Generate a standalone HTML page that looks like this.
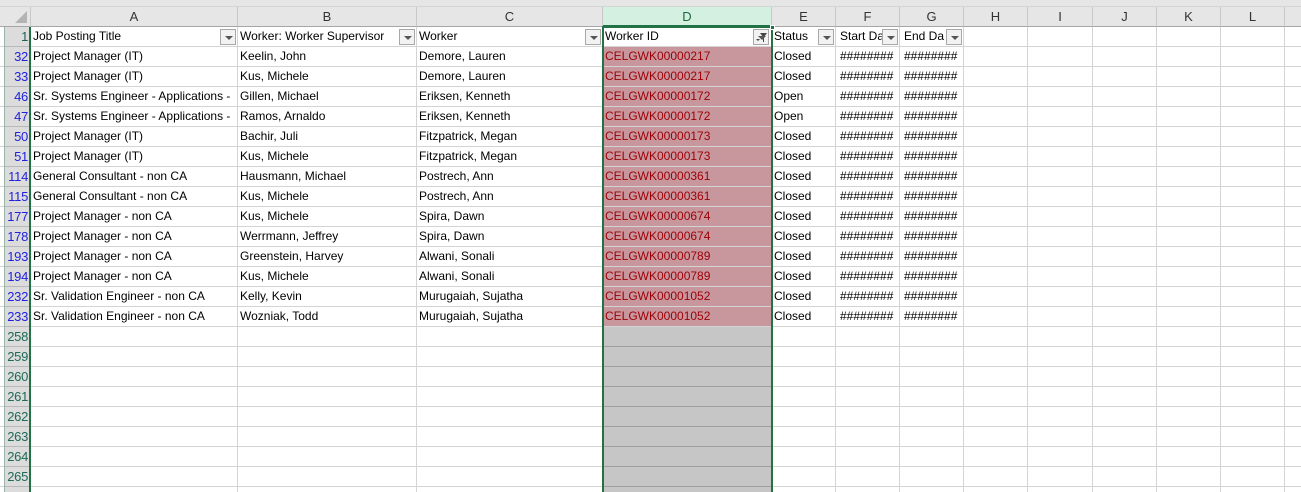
<!DOCTYPE html><html style="width:1301px;height:492px;overflow:hidden"><head><meta charset="utf-8"><style>
*{margin:0;padding:0;box-sizing:border-box}
body{width:1301px;height:492px;overflow:hidden;background:#fff;font-family:"Liberation Sans",Arial,sans-serif;font-size:12px;position:relative}
.top{position:absolute;left:0;top:0;width:1301px;height:7px;background:#e6e6e6;border-bottom:1px solid #d4d4d4}
.hdr{position:absolute;top:7px;height:20px;background:#e6e6e6;border-right:1px solid #c8c8c8;border-bottom:1px solid #a6a6a6;text-align:center;line-height:19px;font-size:13px;color:#333}
.row{position:absolute;left:0;height:20px;width:1301px}
.c{position:absolute;top:0;height:20px;border-right:1px solid #d4d4d4;border-bottom:1px solid #d4d4d4;padding-left:2px;line-height:19px;white-space:nowrap;overflow:hidden;color:#000}
.rh{position:absolute;top:0;left:5px;width:24px;height:20px;background:#dcdcdc;border-bottom:1px solid #b8b8b8;text-align:right;padding-right:1px;line-height:20px;font-size:13px;letter-spacing:-0.3px;color:#2222dd}
.d{background:#c8979e;color:#9c0006;border-right:none}
.de{background:#c6c6c6;border-bottom:1px solid #9e9e9e;border-right:none}
.fb{position:absolute;top:2px;width:16px;height:16px;border:1px solid #a8a8a8;background:#f2f2f2}
.fb:after{content:"";position:absolute;left:4px;top:6px;border-left:4px solid transparent;border-right:4px solid transparent;border-top:4px solid #555}
</style></head><body>
<div class="top"></div>
<div style="position:absolute;left:0;top:7px;width:31px;height:20px;background:#e6e6e6;border-bottom:1px solid #a6a6a6;border-right:1px solid #c8c8c8"><div style="position:absolute;right:3px;bottom:3px;border-left:12px solid transparent;border-bottom:12px solid #b4b4b4"></div></div>
<div class="hdr" style="left:31px;width:207px">A</div>
<div class="hdr" style="left:238px;width:179px">B</div>
<div class="hdr" style="left:417px;width:186px">C</div>
<div class="hdr" style="left:603px;width:169px;background:#d3f0e0;border-bottom:2px solid #217346;color:#1e6a3e">D</div>
<div class="hdr" style="left:772px;width:64px">E</div>
<div class="hdr" style="left:836px;width:64px">F</div>
<div class="hdr" style="left:900px;width:64px">G</div>
<div class="hdr" style="left:964px;width:64px">H</div>
<div class="hdr" style="left:1028px;width:65px">I</div>
<div class="hdr" style="left:1093px;width:64px">J</div>
<div class="hdr" style="left:1157px;width:64px">K</div>
<div class="hdr" style="left:1221px;width:64px">L</div>
<div class="hdr" style="left:1285px;width:16px;border-right:none"></div>
<div id="g"></div>
<script>
var X=[31,238,417,603,772,836,900,964,1028,1093,1157,1221,1285,1302];
var data=[
["1","Job Posting Title","Worker: Worker Supervisor","Worker","Worker ID","Status","Start Da","End Da"],
["32","Project Manager (IT)","Keelin, John","Demore, Lauren","CELGWK00000217","Closed"],
["33","Project Manager (IT)","Kus, Michele","Demore, Lauren","CELGWK00000217","Closed"],
["46","Sr. Systems Engineer - Applications -","Gillen, Michael","Eriksen, Kenneth","CELGWK00000172","Open"],
["47","Sr. Systems Engineer - Applications -","Ramos, Arnaldo","Eriksen, Kenneth","CELGWK00000172","Open"],
["50","Project Manager (IT)","Bachir, Juli","Fitzpatrick, Megan","CELGWK00000173","Closed"],
["51","Project Manager (IT)","Kus, Michele","Fitzpatrick, Megan","CELGWK00000173","Closed"],
["114","General Consultant - non CA","Hausmann, Michael","Postrech, Ann","CELGWK00000361","Closed"],
["115","General Consultant - non CA","Kus, Michele","Postrech, Ann","CELGWK00000361","Closed"],
["177","Project Manager - non CA","Kus, Michele","Spira, Dawn","CELGWK00000674","Closed"],
["178","Project Manager - non CA","Werrmann, Jeffrey","Spira, Dawn","CELGWK00000674","Closed"],
["193","Project Manager - non CA","Greenstein, Harvey","Alwani, Sonali","CELGWK00000789","Closed"],
["194","Project Manager - non CA","Kus, Michele","Alwani, Sonali","CELGWK00000789","Closed"],
["232","Sr. Validation Engineer - non CA","Kelly, Kevin","Murugaiah, Sujatha","CELGWK00001052","Closed"],
["233","Sr. Validation Engineer - non CA","Wozniak, Todd","Murugaiah, Sujatha","CELGWK00001052","Closed"]];
for(var n=258;n<=266;n++)data.push([""+n]);
var h="";
data.forEach(function(r,i){
 var y=27+i*20;
 h+='<div class="row" style="top:'+y+'px">';
 var col=i==0?'#1e5f4e':(r.length>1?'#2222dd':'#1e6a56');
 h+='<div style="position:absolute;left:0;top:0;width:5px;height:20px;border-bottom:1px solid #d4d4d4"></div>';
 h+='<div class="rh" style="color:'+col+'">'+r[0]+'</div>';
 for(var k=0;k<13;k++){
  var t=r[k+1]||"";
  if(i>0&&(k==5||k==6)&&r.length>1)t="########";
  var cls="c";
  if(k==3)cls+=(i>0&&r.length>1)?" d":(i==0?"":" de");
  var st="left:"+X[k]+"px;width:"+(X[k+1]-X[k])+"px;";
  if(k==5||k==6)st+="padding-left:4px;";
  h+='<div class="'+cls+'" style="'+st+'">'+t+'</div>';
  if(i==0&&k<7){
   var bx=X[k+1]-18;
   if(k==3)h+='<div class="fb" style="left:'+(bx-1)+'px;top:2px"><svg width="14" height="14" style="position:absolute;left:0;top:0"><path d="M6 3h7l-3 4v5h-1V7z" fill="#444"/><path d="M2 9h4l-2 2z" fill="#444"/></svg></div>';
   else h+='<div class="fb" style="left:'+bx+'px"></div>';
  }
 }
 h+='</div>';
});
document.getElementById('g').innerHTML=h;
</script>
<div style="position:absolute;left:29px;top:27px;width:2px;height:465px;background:#217346"></div>
<div style="position:absolute;left:4px;top:27px;width:1px;height:465px;background:#9bb5a8"></div>
<div style="position:absolute;left:602px;top:26px;width:2px;height:466px;background:#217346"></div>
<div style="position:absolute;left:771px;top:26px;width:2px;height:466px;background:#217346"></div>
<div style="position:absolute;left:602px;top:26px;width:171px;height:2px;background:#217346"></div>
<div style="position:absolute;left:770px;top:25px;width:5px;height:5px;background:#217346;border:1px solid #fff"></div>
</body></html>
